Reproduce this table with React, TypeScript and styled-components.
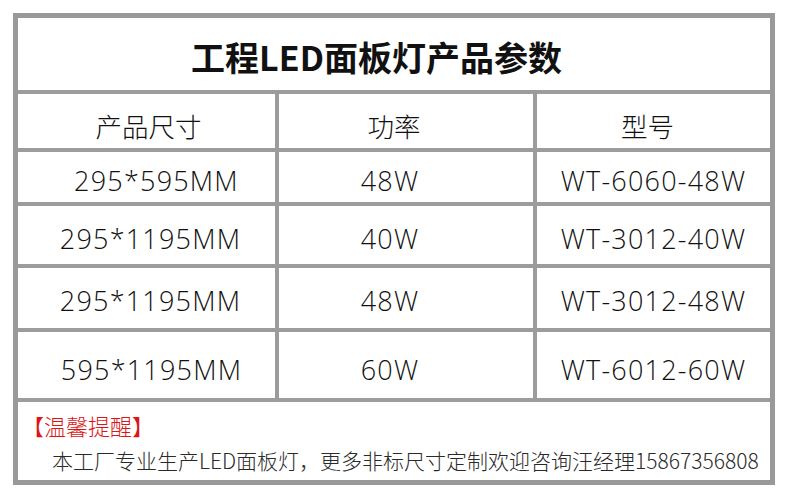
import React from 'react'
import styled, { createGlobalStyle } from 'styled-components'

const GlobalStyle = createGlobalStyle`
  html, body {
    margin: 0;
    padding: 0;
    background: #ffffff;
  }
  body {
    font-family: 'Open Sans', 'Noto Sans CJK SC', sans-serif;
  }
`

const Page = styled.div`
  padding: 13px 0 0 13px;
`

const Table = styled.div`
  width: 752px;
  border: 5px solid #999999;
  background: #9c9c9c;
  display: grid;
  grid-template-columns: 257px 254px 233px;
  grid-template-rows: 72px 54px 50px 58px 60px 66px 78px;
  gap: 4px;
`

const TitleCell = styled.div`
  grid-column: 1 / 4;
  background: #ffffff;
  display: flex;
  align-items: center;
  justify-content: center;
  padding: 5px 35px 0 0;
  font-family: 'Noto Sans CJK SC', sans-serif;
  font-weight: 700;
  font-size: 34px;
  color: #111111;
`

const Cell = styled.div<{ $shift?: number; $head?: boolean; $drop?: number }>`
  background: #ffffff;
  display: flex;
  align-items: center;
  justify-content: center;
  padding-top: ${({ $drop }) => $drop ?? 6}px;
  padding-left: ${({ $shift }) => ($shift && $shift > 0 ? $shift * 2 : 0)}px;
  padding-right: ${({ $shift }) => ($shift && $shift < 0 ? -$shift * 2 : 0)}px;
  font-family: ${({ $head }) => ($head ? "'Noto Sans CJK SC', sans-serif" : "'Open Sans', 'Noto Sans CJK SC', sans-serif")};
  font-weight: 300;
  font-size: ${({ $head }) => ($head ? 26.5 : 27)}px;
  letter-spacing: ${({ $head }) => ($head ? 0 : 1.2)}px;
  color: #111111;
  white-space: nowrap;
`

const NoteCell = styled.div`
  grid-column: 1 / 4;
  background: #ffffff;
  display: flex;
  flex-direction: column;
  padding: 8px 0 0 4px;
  font-family: 'Noto Sans CJK SC', sans-serif;
  font-weight: 300;
`

const Warn = styled.div`
  color: #dd1515;
  font-size: 22px;
  line-height: 30px;
`

const NoteText = styled.div`
  color: #2a2a2a;
  font-size: 21px;
  line-height: 28px;
  margin-top: 6px;
  padding-left: 30px;
  white-space: nowrap;
`

const rows = [
  { size: '295*595MM', power: '48W', model: 'WT-6060-48W', sizeShift: 10, drop: 6 },
  { size: '295*1195MM', power: '40W', model: 'WT-3012-40W', sizeShift: 4, drop: 6 },
  { size: '295*1195MM', power: '48W', model: 'WT-3012-48W', sizeShift: 4, drop: 4 },
  { size: '595*1195MM', power: '60W', model: 'WT-6012-60W', sizeShift: 5, drop: 8 }
]

export default function App() {
  return (
    <Page>
      <GlobalStyle />
      <Table>
        <TitleCell>工程LED面板灯产品参数</TitleCell>

        <Cell $head $shift={2} $drop={8}>产品尺寸</Cell>
        <Cell $head $shift={-12} $drop={8}>功率</Cell>
        <Cell $head $shift={-6} $drop={8}>型号</Cell>

        {rows.map((r, i) => (
          <React.Fragment key={i}>
            <Cell $shift={r.sizeShift} $drop={r.drop}>{r.size}</Cell>
            <Cell $shift={-16} $drop={r.drop}>{r.power}</Cell>
            <Cell $drop={r.drop}>{r.model}</Cell>
          </React.Fragment>
        ))}

        <NoteCell>
          <Warn>【温馨提醒】</Warn>
          <NoteText>本工厂专业生产LED面板灯，更多非标尺寸定制欢迎咨询汪经理15867356808</NoteText>
        </NoteCell>
      </Table>
    </Page>
  )
}
